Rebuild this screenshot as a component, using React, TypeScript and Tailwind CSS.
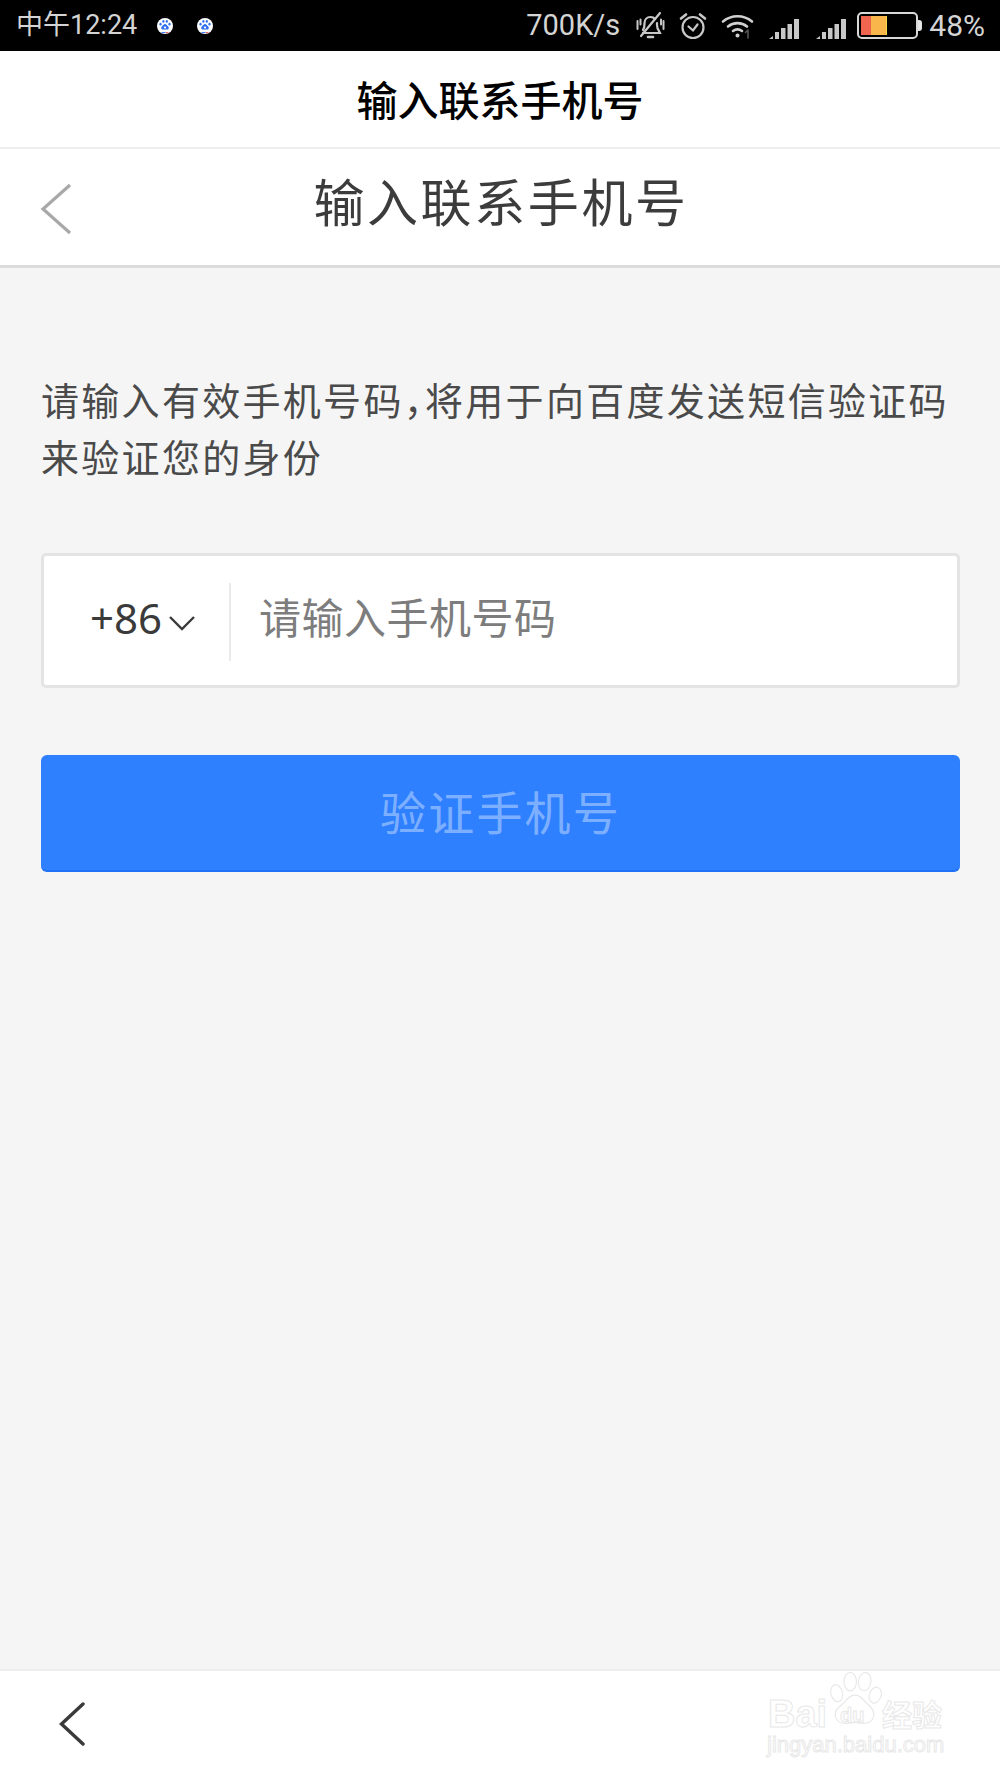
const cjk = "font-['Noto_Sans_CJK_SC','Noto_Sans',sans-serif]";

function PawBadge() {
    return (
        <svg width="16" height="16" viewBox="0 0 16 16">
            <circle cx="8" cy="8" r="8" fill="#fff" />
            <ellipse cx="6.4" cy="3.4" rx="1.1" ry="1.4" fill="#3170f0" />
            <ellipse cx="9.8" cy="3.4" rx="1.1" ry="1.4" fill="#3170f0" />
            <ellipse cx="3.5" cy="6.2" rx="1.1" ry="1.4" fill="#3170f0" />
            <ellipse cx="12.5" cy="6.2" rx="1.1" ry="1.4" fill="#3170f0" />
            <path d="M8 6c1.300 0 1.700 1.200 2.600 2 .9.8 1.400 1.400 1.100 2.400-.3 1-1.300 1.300-2.300 1.200-.6-.1-.9-.2-1.400-.2s-.8.1-1.400.2c-1 .1-2-.2-2.300-1.200-.3-1 .2-1.600 1.100-2.400.9-.8 1.300-2 2.600-2z" fill="#3170f0" />
            <circle cx="8" cy="9.500" r="1.100" fill="#fff" />
            <path d="M4.500 14.600h4" stroke="#3170f0" strokeWidth="1" />
            <path d="M8.500 14.600h3" stroke="#e05555" strokeWidth="1" />
        </svg>
    );
}

function SignalBars() {
    return (
        <svg width="32" height="22" viewBox="0 0 32 22" fill="#c8c8c8">
            <path d="M0 21l4-3v3z" />
            <rect x="6" y="14" width="4" height="7" />
            <rect x="12" y="10" width="4.500" height="11" />
            <rect x="18.500" y="6" width="4.500" height="15" />
            <rect x="25" y="1" width="5" height="20" />
        </svg>
    );
}

function StatusBar() {
    return (
        <div className="h-[51px] bg-black flex items-center justify-between pl-[16px] pr-[15px] text-[#d4d4d4] font-['Roboto',sans-serif]">
            {/* Left */}
            <div className="flex items-center">
                <span className="text-[27px] leading-[51px] font-['Roboto','Noto_Sans_CJK_SC',sans-serif]">中午12:24</span>
                <div className="ml-[20px] flex items-center gap-[24px]">
                    <PawBadge />
                    <PawBadge />
                </div>
            </div>

            {/* Right */}
            <div className="flex items-center">
                <span className="text-[29px] leading-[51px]">700K/s</span>

                <svg className="ml-[15px]" width="31" height="30" viewBox="0 0 31 30" fill="none" stroke="#c8c8c8" strokeWidth="2.200" strokeLinecap="round">
                    <path d="M8 19c1.500-2 1.500-4 1.500-7 0-3.500 2.500-6 6-6 2 0 3.500.7 4.500 2M22 12v2c0 2.500.5 4 2 6l1 2H8" />
                    <path d="M13 26h5" strokeWidth="2.600" />
                    <path d="M25 2L6 25" />
                    <path d="M2.500 10v8M5.500 8.500v5M28.500 10v8M26 8.500v5" strokeWidth="2" />
                </svg>

                <svg className="ml-[13px]" width="28" height="28" viewBox="0 0 28 28" fill="none" stroke="#c8c8c8" strokeWidth="2.200" strokeLinecap="round">
                    <circle cx="14" cy="15.500" r="10.500" />
                    <path d="M9.500 14.500l4.500 4 4.500-6" />
                    <path d="M2 6.500L7 2.500M26 6.500L21 2.500" strokeWidth="2.600" />
                </svg>

                <svg className="ml-[14px]" width="34" height="26" viewBox="0 0 34 26" fill="none" stroke="#d0d0d0" strokeWidth="2.600" strokeLinecap="round">
                    <path d="M2 8.500C10.500 1.500 22.500 1.500 31 8.500" />
                    <path d="M7 13.500c5.500-4.500 13.500-4.500 19 0" />
                    <path d="M12 18c3-2.200 6-2.200 9 0" />
                    <circle cx="16.500" cy="22.500" r="2" fill="#d0d0d0" stroke="none" />
                    <path d="M27 25v-8M24.500 19.500l2.500-2.500" stroke="#555" strokeWidth="1.600" />
                </svg>

                <div className="ml-[14px] mt-[6px] flex items-center gap-[15px]">
                    <SignalBars />
                    <SignalBars />
                </div>

                {/* Battery */}
                <div className="ml-[9px] flex items-center">
                    <div className="w-[61px] h-[27px] rounded-[5px] border-2 border-[#d8d8d8] p-[2px] flex">
                        <div className="w-[10px] bg-[#f0654f]"></div>
                        <div className="w-[15px] bg-[#f9b64a]"></div>
                        <div className="w-[1px] bg-[#f3dc4a]"></div>
                    </div>
                    <div className="w-[4px] h-[11px] bg-[#e6e6e6] rounded-r-[3px]"></div>
                </div>

                <span className="ml-[7px] text-[30px] leading-[51px]">48%</span>
            </div>
        </div>
    );
}

function Watermark() {
    const outline = "text-white [-webkit-text-stroke:1px_#e8e8e8] font-['Liberation_Sans',sans-serif]";
    return (
        <div className="absolute left-[765px] top-0 w-[190px] h-[90px]">
            <svg className="absolute left-[63px] top-[1px]" width="54" height="54" viewBox="0 0 56 56" fill="#fff" stroke="#e8e8e8" strokeWidth="1.200">
                <ellipse cx="9" cy="22" rx="6" ry="9" transform="rotate(-15 9 22)" />
                <ellipse cx="23" cy="10" rx="6.500" ry="9.500" />
                <ellipse cx="38" cy="10" rx="6.500" ry="9.500" transform="rotate(8 38 10)" />
                <ellipse cx="49" cy="24" rx="6" ry="8.500" transform="rotate(20 49 24)" />
                <path d="M28 24c7 0 9 6 15 11 5 5 6 9 3 14-3 5-10 5-18 3-8 2-16 2-19-3-3-5-1-10 4-14 6-5 8-11 15-11z" />
            </svg>
            <span className={`absolute left-[3px] top-[21px] text-[38px] leading-[44px] font-bold ${outline}`}>Bai</span>
            <span className={`absolute left-[75px] top-[32px] text-[20px] leading-[24px] font-bold ${outline}`}>du</span>
            <span className="absolute left-[117px] top-[23px] text-[30px] leading-[38px] font-bold text-white [-webkit-text-stroke:1px_#e8e8e8] font-['Noto_Sans_CJK_SC',sans-serif]">经验</span>
            <span className={`absolute left-[2px] top-[62px] text-[22px] leading-[24px] whitespace-nowrap ${outline}`}>jingyan.baidu.com</span>
        </div>
    );
}

export default function App() {
    return (
        <div className={`relative w-[1000px] h-[1778px] flex flex-col bg-[#f5f5f5] overflow-hidden ${cjk}`}>
            <StatusBar />

            {/* App title */}
            <div className="h-[98px] shrink-0 bg-white border-b-2 border-[#eeeeee] flex items-center justify-center pb-[2px]">
                <span className="text-[41px] leading-[56px] font-medium text-black">输入联系手机号</span>
            </div>

            {/* Page header */}
            <div className="relative h-[119px] shrink-0 bg-white border-b-[3px] border-[#dcdcdc] flex items-center justify-center">
                <svg className="absolute left-[39px] top-[34px]" width="36" height="52" viewBox="0 0 36 52" fill="none" stroke="#a8a8a8" strokeWidth="3.200">
                    <path d="M31 2L4 26l27 24" />
                </svg>
                <span className="text-[51px] leading-[64px] tracking-[2.600px] text-[#3c3c3c] pb-[14px] pl-[2px]">输入联系手机号</span>
            </div>

            {/* Form */}
            <div className="flex-1 px-[41px] pt-[105px]">
                <p className="text-[38px] leading-[57px] tracking-[2.300px] [font-feature-settings:'halt'] text-[#4a4a4a] -mt-[3px]">
                    请输入有效手机号码，将用于向百度发送短信验证码来验证您的身份
                </p>

                <div className="mt-[69px] h-[135px] w-[919px] bg-white border-[3px] border-[#e4e4e4] rounded-[5px] flex items-center">
                    <div className="mt-[3px] w-[187px] h-[78px] shrink-0 border-r-2 border-[#eaeaea] flex items-center pl-[46px]">
                        <span className="text-[42px] leading-[52px] text-[#3a3a3a] font-['Noto_Sans',sans-serif] pb-[9px]">+86</span>
                        <svg className="ml-[7px] mt-[2px]" width="26" height="16" viewBox="0 0 26 16" fill="none" stroke="#3a3a3a" strokeWidth="2.400">
                            <path d="M1 2l12 12L25 2" />
                        </svg>
                    </div>
                    <span className="pl-[28px] pb-[9px] text-[42px] leading-[56px] tracking-[0.500px] text-[#7d7d7d]">请输入手机号码</span>
                </div>

                <div className="mt-[67px] h-[117px] w-[919px] bg-[#2e80ff] border-b-2 border-[#1f72f5] rounded-[6px] flex items-center justify-center">
                    <span className="text-[46px] leading-[60px] tracking-[2.200px] text-white/40 pb-[5px]">验证手机号</span>
                </div>
            </div>

            {/* Bottom bar */}
            <div className="relative h-[109px] shrink-0 bg-white border-t-2 border-[#eeeeee]">
                <svg className="absolute left-[58px] top-[31px]" width="30" height="44" viewBox="0 0 30 44" fill="none" stroke="#3a3a3a" strokeWidth="3.400" strokeLinecap="round">
                    <path d="M25 2L3.500 22 25 42" />
                </svg>
                <Watermark />
            </div>
        </div>
    );
}
